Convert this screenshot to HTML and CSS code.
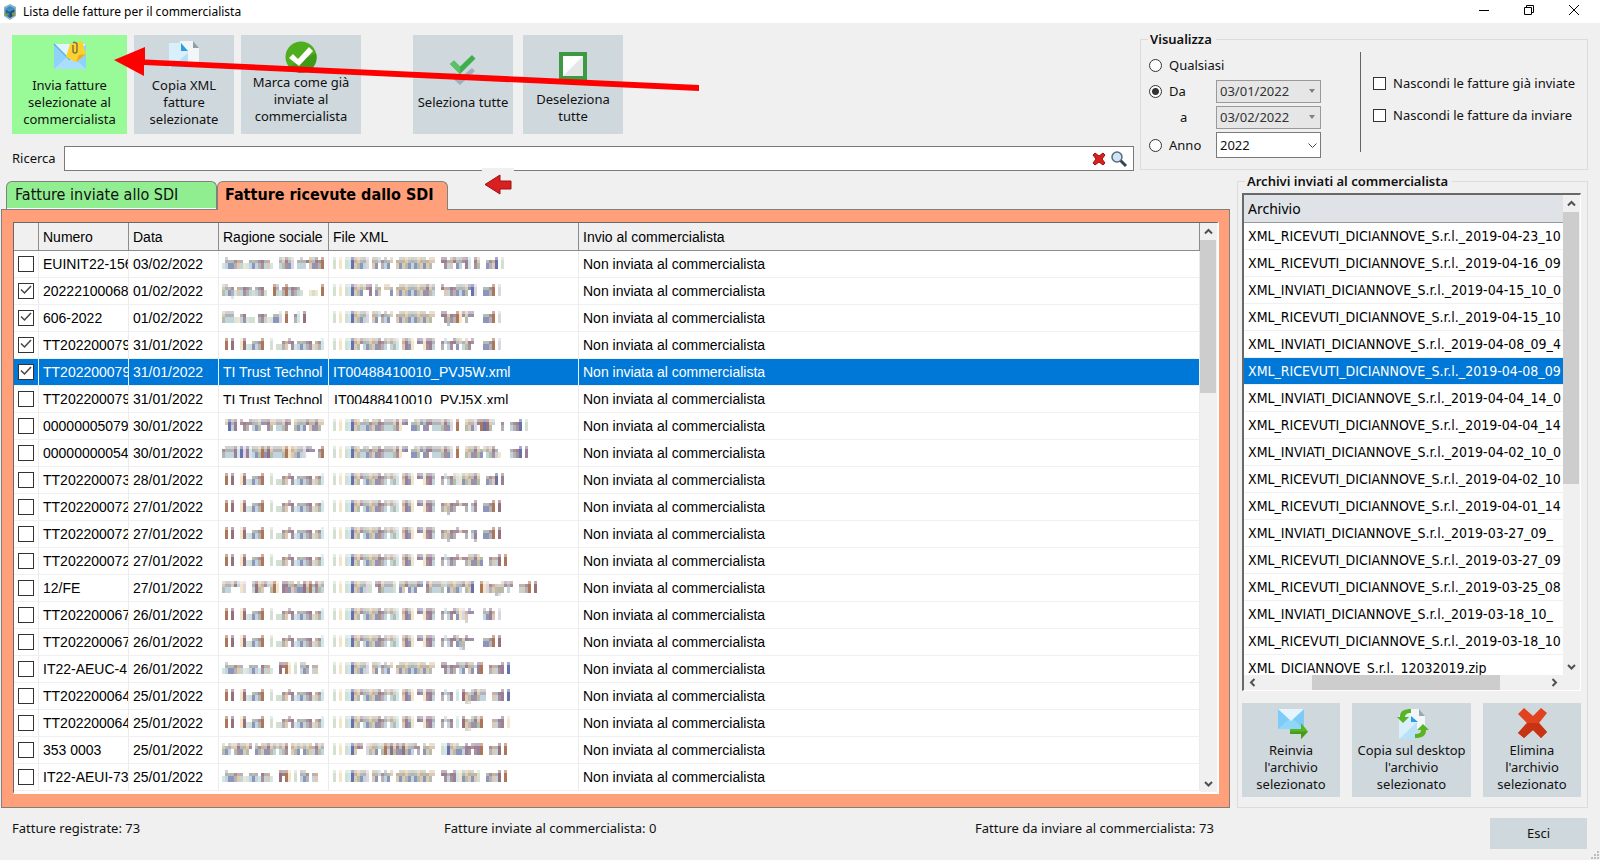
FILE: index.html
```html
<!DOCTYPE html>
<html lang="it">
<head>
<meta charset="utf-8">
<title>Lista delle fatture per il commercialista</title>
<link rel="stylesheet" href="styles.css">
</head>
<body>
<header class="titlebar">
  <svg class="app-icon" width="14" height="16" viewBox="0 0 14 16"><path d="M7 0l6 3v9l-6 4-6-4V3z" fill="#8fb0c4"/><path d="M7 2l4.500 2.500L7 7 2.500 4.500z" fill="#2f8fd0"/><path d="M2.500 5L7 7.500V14l-4.500-3z" fill="#1d6a9a"/><path d="M11.500 5L7 7.500V14l4.500-3z" fill="#1f4f7d"/><path d="M1.500 9.500h4v2h-4zM9 8.500h3v3H9z" fill="#8a9a3a"/></svg>
  <h1 class="title">Lista delle fatture per il commercialista</h1>
  <div class="window-buttons">
    <button class="win" aria-label="Riduci a icona"><svg width="12" height="12" viewBox="0 0 12 12"><path d="M1 6.500h10" stroke="#000" fill="none"/></svg></button>
    <button class="win" aria-label="Ripristina"><svg width="12" height="12" viewBox="0 0 12 12"><path d="M1.500 3.500h7v7h-7zM3.500 3.500v-2h7v7h-2" stroke="#000" fill="none"/></svg></button>
    <button class="win" aria-label="Chiudi"><svg width="12" height="12" viewBox="0 0 12 12"><path d="M1 1l10 10M11 1L1 11" stroke="#000" fill="none"/></svg></button>
  </div>
</header>

<main class="window">
  <section class="top">
    <div class="top-left">
      <div class="toolbar">
        <button class="tool tool-send">
          <svg width="34" height="30" viewBox="0 0 34 30"><path d="M1 4h32v25H1z" fill="#8fd3fa"/><path d="M1 29l13-12h6l13 12z" fill="#a9defc"/><path d="M1 4l16 16L33 4z" fill="#e2f4fd"/><path d="M1 4l16 16" stroke="#5fb4e6" stroke-width="1.500"/><path d="M17 4l12-3 4 13-10 8-10-5z" fill="#fdd22e"/><path d="M23 22l10-8-7 1z" fill="#f0a91c"/><path d="M20 5v6a2 2 0 0 0 4 0V4a2.500 2.500 0 0 0-4-1" stroke="#7d7444" stroke-width="1.500" fill="none"/></svg>
          <span>Invia fatture<br>selezionate al<br>commercialista</span>
        </button>
        <button class="tool tool-copy">
          <svg width="34" height="30" viewBox="0 0 34 30"><path d="M13 1h13l6 7v17H13z" fill="#f2f6f9"/><path d="M26 1v7h6z" fill="#8f9ea8"/><path d="M2 3h12l7 8v18H2z" fill="#d9f0fc"/><path d="M2 29L21 13v16z" fill="#b4dff6"/><path d="M14 3v8h7z" fill="#2a9fe0"/></svg>
          <span>Copia XML<br>fatture<br>selezionate</span>
        </button>
        <button class="tool tool-mark">
          <svg width="32" height="32" viewBox="0 0 32 32"><circle cx="16" cy="16" r="15.500" fill="#4fae1e"/><path d="M4 26A15.500 15.500 0 0 0 31 12z" fill="#3f9a17"/><path d="M4 17l4-4 5 5L24 6l4 4L14 25z" fill="#fff"/></svg>
          <span>Marca come già<br>inviate al<br>commercialista</span>
        </button>
        <button class="tool tool-all">
          <svg width="32" height="32" viewBox="0 0 32 32"><path d="M3 22l4-3 6 5L25 14l3 3-15 14z" fill="#9fb0ba"/><path d="M3 10l4-3.500 6 6L25 1l3.500 3.500L13 20z" fill="#3fae4c"/><path d="M3 10l4-3.500 6 6v7.500z" fill="#59c265"/></svg>
          <span>Seleziona tutte</span>
        </button>
        <button class="tool tool-none">
          <svg width="30" height="30" viewBox="0 0 30 30"><path d="M3 3h24v24H3z" fill="#fff"/><path d="M27 3v24H3z" fill="#e4e6e8"/><path d="M3 3h24v24H3z" fill="none" stroke="#3d9a43" stroke-width="4"/></svg>
          <span>Deseleziona<br>tutte</span>
        </button>
      </div>
      <div class="search">
        <label for="q">Ricerca</label>
        <div class="search-box">
          <input id="q" type="text">
          <button class="mini" aria-label="Cancella"><svg width="14" height="14" viewBox="0 0 14 14"><path d="M1 3l2-2 4 3 4-3 2 2-3 4 3 4-2 2-4-3-4 3-2-2 3-4z" fill="#d8201c" stroke="#9c1210"/></svg></button>
          <button class="mini" aria-label="Cerca"><svg width="18" height="18" viewBox="0 0 18 18"><path d="M10 10l6 6" stroke="#3c4450" stroke-width="3"/><circle cx="7" cy="7" r="5" fill="#cfe6f6" stroke="#5a6a7c" stroke-width="1.500"/></svg></button>
        </div>
      </div>
    </div>
    <fieldset class="group view">
      <legend>Visualizza</legend>
      <div class="period">
        <label class="opt"><input type="radio" name="p">Qualsiasi</label>
        <span></span>
        <label class="opt"><input type="radio" name="p" checked>Da</label>
        <div class="pick off"><select disabled aria-label="Da"><option>03/01/2022</option></select><svg width="6" height="4" viewBox="0 0 6 4"><path d="M0 0h6L3 4z" fill="#808080"/></svg></div>
        <label class="opt to" for="to">a</label>
        <div class="pick off"><select id="to" disabled><option>03/02/2022</option></select><svg width="6" height="4" viewBox="0 0 6 4"><path d="M0 0h6L3 4z" fill="#808080"/></svg></div>
        <label class="opt opt-year"><input type="radio" name="p">Anno</label>
        <div class="pick year"><select aria-label="Anno"><option>2022</option></select><svg width="9" height="6" viewBox="0 0 9 6"><path d="M.5.5l4 4 4-4" stroke="#444" fill="none"/></svg></div>
      </div>
      <div class="hide">
        <label class="opt"><input type="checkbox">Nascondi le fatture già inviate</label>
        <label class="opt"><input type="checkbox">Nascondi le fatture da inviare</label>
      </div>
    </fieldset>
  </section>

  <section class="middle">
    <div class="tabs-area">
      <div class="tabs" role="tablist">
        <button class="tab" role="tab" aria-selected="false">Fatture inviate allo SDI</button>
        <button class="tab tab-on" role="tab" aria-selected="true">Fatture ricevute dallo SDI</button>
      </div>
      <div class="panel">
        <div class="grid-box">
          <div class="grid-main">
            <table class="invoices">
              <colgroup><col class="c-check"><col class="c-num"><col class="c-date"><col class="c-name"><col class="c-file"><col></colgroup>
              <thead><tr><th></th><th>Numero</th><th>Data</th><th>Ragione sociale</th><th>File XML</th><th>Invio al commercialista</th></tr></thead>
              <tbody id="rows"></tbody>
            </table>
          </div>
          <div class="vbar">
            <svg width="17" height="17" viewBox="0 0 17 17"><path d="M5 10.500L8.500 7l3.500 3.500" stroke="#505050" stroke-width="2" fill="none"/></svg>
            <div class="thumb thumb-grid"></div>
            <svg class="end" width="17" height="17" viewBox="0 0 17 17"><path d="M5 7l3.500 3.500L12 7" stroke="#505050" stroke-width="2" fill="none"/></svg>
          </div>
        </div>
      </div>
    </div>
    <fieldset class="group archive">
      <legend>Archivi inviati al commercialista</legend>
      <div class="list">
        <div class="list-main">
          <table class="files">
            <thead><tr><th>Archivio</th></tr></thead>
            <tbody id="files"></tbody>
          </table>
        </div>
        <div class="vbar">
          <svg width="17" height="17" viewBox="0 0 17 17"><path d="M5 10.500L8.500 7l3.500 3.500" stroke="#505050" stroke-width="2" fill="none"/></svg>
          <div class="thumb thumb-list"></div>
          <svg class="end" width="17" height="17" viewBox="0 0 17 17"><path d="M5 7l3.500 3.500L12 7" stroke="#505050" stroke-width="2" fill="none"/></svg>
        </div>
        <div class="hbar">
          <svg width="17" height="15" viewBox="0 0 17 15"><path d="M10.500 4L7 7.500l3.500 3.500" stroke="#505050" stroke-width="2" fill="none"/></svg>
          <div class="track"><div class="thumb-h"></div></div>
          <svg width="17" height="15" viewBox="0 0 17 15"><path d="M6.500 4L10 7.500 6.500 11" stroke="#505050" stroke-width="2" fill="none"/></svg>
        </div>
      </div>
      <div class="actions">
        <button class="tool">
          <svg width="34" height="32" viewBox="0 0 34 32"><path d="M4 2h26v20H4z" fill="#7ecbf7"/><path d="M4 22l10-9h6l10 9z" fill="#8fd6fb"/><path d="M4 2l13 12L30 2z" fill="#e6f5fd"/><path d="M16 22h11v-6l7 8.500-7 7.500v-5H16z" fill="#58b422"/><path d="M16 24.500h18l-7 7.500v-5H16z" fill="#469c18"/></svg>
          <span>Reinvia<br>l'archivio<br>selezionato</span>
        </button>
        <button class="tool">
          <svg width="34" height="32" viewBox="0 0 34 32"><path d="M12 2h12l6 7v14H12z" fill="#f2f6f9"/><path d="M24 2v7h6z" fill="#9aa8b0"/><path d="M4 8h10l8 7v17H4z" fill="#d9f0fc"/><path d="M4 32l18-17v17z" fill="#b9e2f8"/><path d="M16 9v6h7z" fill="#2a9fe0"/><path d="M16 2v4c-4 0-6 1-6 4h4l-6 6-6-6h3c0-6 4-8 11-8z" fill="#58b422"/><path d="M20 31v-4c4 0 6-1 6-4h-4l6-6 6 6h-3c0 6-4 8-11 8z" fill="#58b422"/></svg>
          <span>Copia sul desktop<br>l'archivio<br>selezionato</span>
        </button>
        <button class="tool">
          <svg width="32" height="32" viewBox="0 0 32 32"><path d="M2 7l6-6 9 8 8-8 6 5-8 10 8 9-6 6-8-8-9 8-6-5 9-10z" fill="#e0431d"/><path d="M2 26l9-10h12l8 9-6 6-8-8-9 8z" fill="#c63413"/></svg>
          <span>Elimina<br>l'archivio<br>selezionato</span>
        </button>
      </div>
    </fieldset>
  </section>

  <footer class="status">
    <span>Fatture registrate: 73</span>
    <span>Fatture inviate al commercialista: 0</span>
    <span>Fatture da inviare al commercialista: 73</span>
    <button class="exit">Esci</button>
  </footer>
</main>

<svg class="pointer" width="590" height="50" viewBox="0 0 590 50"><path d="M0 16L31 3v12.500L585 41v6L30 21v11z" fill="#fe0000"/></svg>
<div class="hint"><svg width="28" height="21" viewBox="0 0 28 21"><path d="M1 10.500L16 1v6h11v8H16v5z" fill="#d91f1f" stroke="#9e1212"/></svg></div>
<svg class="grip" width="10" height="10" viewBox="0 0 10 10"><path d="M7 1h2v2H7zM7 4h2v2H7zM7 7h2v2H7zM4 4h2v2H4zM4 7h2v2H4zM1 7h2v2H1z" fill="#bdbdbd"/></svg>
<script src="app.js"></script>
</body>
</html>
```
FILE: styles.css
```css
* { box-sizing: border-box; }
body {
  margin: 0;
  min-height: 100vh;
  display: flex;
  flex-direction: column;
  position: relative;
  background: #f0f0f0;
  color: #111;
  font: 13px/17px "Noto Sans", "Open Sans", sans-serif;
}
button, input, select { font: inherit; color: inherit; margin: 0; }
button { border: 0; padding: 0; background: none; }
svg { display: block; flex: none; }

.titlebar { display: flex; align-items: center; height: 23px; padding: 0 20px 0 3px; background: #fff; }
.title { flex: 1; margin: 0 0 0 6px; font-size: 12px; font-weight: 400; color: #000; }
.window-buttons { display: flex; gap: 33px; align-self: flex-start; padding-top: 4px; }
.win { width: 12px; height: 12px; }

.window { flex: 1; display: flex; flex-direction: column; padding: 8px 13px 11px 1px; }
.top { display: flex; gap: 6px; padding-left: 11px; margin-right: -1px; }
.top-left { flex: 1; padding-top: 4px; }
.toolbar { display: flex; }
.tool {
  display: flex;
  flex-direction: column;
  align-items: center;
  justify-content: center;
  gap: 7px;
  height: 99px;
  background: #cfd8dd;
  text-align: center;
}
.tool-send { width: 115px; margin-right: 7px; padding-bottom: 2px; background: #98fb98; }
.tool-copy { width: 100px; margin-right: 7px; padding-bottom: 2px; }
.tool-mark { width: 120px; margin-right: 52px; gap: 1px; justify-content: flex-start; padding-top: 6px; }
.tool-all { width: 100px; margin-right: 10px; padding-bottom: 4px; gap: 8px; }
.tool-none { width: 100px; padding-top: 6px; gap: 10px; }

.search { display: flex; align-items: center; margin-top: 12px; }
.search label { width: 52px; }
.search-box { flex: 1; display: flex; align-items: center; gap: 4px; height: 25px; padding-right: 5px; border: 1px solid #7a7a7a; background: #fff; }
.search-box input { flex: 1; height: 23px; border: 0; outline: 0; background: none; }

.group { margin: 0; border: 1px solid #dcdcdc; min-width: 0; }
.group legend { padding: 0 4px 0 2px; font-weight: 600; color: #111; }
.view { width: 448px; height: 139px; padding: 0 10px 0 7px; display: flex; }
.period { display: grid; grid-template-columns: 67px 105px; align-content: start; row-gap: 3px; width: 212px; padding: 6px 0 0 1px; }
.opt { display: flex; align-items: center; gap: 7px; height: 23px; white-space: nowrap; }
.opt-year { height: 26px; }
.opt input { appearance: none; flex: none; width: 13px; height: 13px; border: 1px solid #333; background: #fff; }
.opt input[type=radio] { border-radius: 50%; }
.opt input[type=radio]:checked { background: radial-gradient(circle, #333 3px, #fff 4px); }
.to { padding-left: 31px; }
.pick { position: relative; height: 23px; }
.pick select { appearance: none; width: 100%; height: 100%; padding: 0 3px; border: 1px solid #7a7a7a; border-radius: 0; background: #fff; opacity: 1; }
.pick.off select { border-color: #999; background: #e6e6e6; color: #333; }
.pick svg { position: absolute; right: 6px; top: 9px; }
.pick.year { height: 26px; }
.pick.year svg { right: 4px; top: 11px; }
.hide { flex: 1; display: flex; flex-direction: column; gap: 9px; height: 100px; margin-top: 4px; padding: 20px 0 0 12px; border-left: 1px solid #646464; }

.middle { flex: 1; display: flex; gap: 7px; margin-right: -1px; }
.tabs-area { flex: 1; min-width: 0; display: flex; flex-direction: column; padding-top: 10px; }
.tabs { display: flex; padding-left: 5px; }
.tab {
  width: 211px;
  height: 28px;
  padding: 0 8px 2px;
  border: 1px solid #82807c;
  border-bottom: 0;
  border-radius: 6px 6px 0 0;
  background: #90ee90;
  box-shadow: inset 0 -1px #fff;
  font: 16px/20px "DejaVu Sans Condensed", "DejaVu Sans", sans-serif;
  text-align: left;
  white-space: nowrap;
}
.tab-on { width: 231px; height: 29px; margin-bottom: -1px; padding: 0 7px 3px; background: #ffa07a; box-shadow: none; font-weight: 700; color: #000; z-index: 1; }
.panel { flex: 1; padding: 12px 10px 13px 11px; border: 1px solid #82807c; background: #ffa07a; }
.grid-box { display: flex; height: 100%; border: solid #fff; border-width: 1px 2px 2px 1px; border-top-color: #696969; border-left-color: #696969; background: #fff; }
.grid-main { flex: 1; min-width: 0; }

table { border-collapse: separate; border-spacing: 0; table-layout: fixed; width: 100%; }
th, td { padding: 0 2px 0 4px; overflow: hidden; white-space: nowrap; text-align: left; font-weight: 400; color: #000; }
.invoices { font: 14px/18px "Liberation Sans", sans-serif; }
.invoices th { height: 28px; background: #f0f0f0; border-right: 1px solid #8c8c8c; border-bottom: 1px solid #8c8c8c; }
.invoices td { position: relative; height: 27px; border-right: 1px solid #ececec; border-bottom: 1px solid #f0f0f0; }
.c-check { width: 25px; }
.c-num, .c-date { width: 90px; }
.c-name { width: 110px; }
.c-file { width: 250px; }
.invoices td:first-child { padding: 0 0 1px 4px; }
.invoices td input { display: block; appearance: none; width: 16px; height: 16px; border: 1px solid #333; background: #fff; }
.invoices .tick { position: absolute; left: 5px; top: 6px; pointer-events: none; }
.invoices .sel td { background: #0078d7; color: #fff; border-right-color: #e8f2fb; }
.mosaic { display: block; height: 15px; image-rendering: pixelated; }
.name { padding-left: 3px; padding-right: 0; }
.half { display: block; height: 13px; margin-bottom: 4px; padding-left: 1px; overflow: hidden; }

.vbar { display: flex; flex-direction: column; width: 17px; background: #f0f0f0; }
.vbar .end { margin-top: auto; }
.thumb { background: #cdcdcd; width: 16px; }
.thumb-grid { height: 153px; }
.thumb-list { height: 272px; }

.archive { width: 351px; padding: 0 6px 8px 4px; margin-top: 2px; display: flex; flex-direction: column; }
.archive legend { margin-left: 3px; }
.list {
  display: grid;
  grid-template-columns: 1fr 17px;
  grid-template-rows: 1fr 15px;
  height: 498px;
  margin-top: 3px;
  border: 1px solid #fff;
  border-top: 2px solid #696969;
  border-left: 2px solid #696969;
  background: #f0f0f0;
}
.list-main { overflow: hidden; background: #fff; }
.files { font: 14px/18px "DejaVu Sans Condensed", "DejaVu Sans", sans-serif; }
.files th { height: 28px; background: #dfe3e8; border-bottom: 1px solid #999; font: 14px/18px "Noto Sans", sans-serif; }
.files td { height: 27px; padding-right: 0; border-bottom: 1px solid #f0f0f0; }
.files .sel td { background: #0078d7; color: #fff; }
.hbar { display: flex; }
.track { flex: 1; }
.thumb-h { width: 66%; height: 15px; margin-left: 18%; background: #cdcdcd; }
.actions { display: grid; grid-template-columns: 98fr 119fr 98fr; gap: 12px; margin-top: 12px; }
.actions .tool { height: 94px; gap: 3px; white-space: nowrap; }

.status { display: grid; grid-template-columns: 432px 531px 1fr 97px; padding: 10px 0 0 11px; }
.status span { padding-top: 2px; }
.exit { height: 31px; background: #cfd8dd; }

.pointer { position: absolute; left: 114px; top: 44px; pointer-events: none; }
.hint { position: absolute; left: 482px; top: 168px; width: 32px; padding: 6px 2px 0; background: #f0f0f0; }
.grip { position: absolute; right: 0; bottom: 0; }
```
FILE: app.js
```js
// Column codes for masked text: I dark stroke, D dense glyph, x low glyph,
// n pale low glyph, i pale stroke, u top part, m middle bar, q descender.
const TRUST = " I I  iInnxxxI  i nnxxuxnxxxxxnxxi";
const AMAZON = "nDxxxxxnnxxxnxxxn  IuIi i DDx xx ";
const CODE = "i i iiIDDuDDDDDDxDuDDi DIDi uuiDID";
const COMPANY = "i i iiIDDDDi DDuxDxu xDDDDDDDDDxDu";
const rows = [
  [0, "EUINIT22-156", "03/02/2022", "nDxxxxxnnxxxxxxxn  DDDDi xDxmDDDxI", COMPANY + "  uDxDuDDuIi DD  xxxI i"],
  [1, "20222100068", "01/02/2022", "DDxqnxxxxxnxxxn  IDnxIxxxxn  nnn I", "i i iiIDDDuuI Dx uux xDDDDDDDDDDDD" + "  uxxxxDDDDuIi  xxxI i"],
  [1, "606-2022", "01/02/2022", "DDDDnnxxnnn xxxnnxxi I  xi I", COMPANY + "  uDqxxIiuDuu   xxxI i"],
  [1, "TT202200079", "31/01/2022", TRUST, CODE + "  xuxxuDuxDxu   xxxI i"],
  [1, "TT202200079", "31/01/2022", "=TI Trust Technol", "=IT00488410010_PVJ5W.xml"],
  [0, "TT202200079", "31/01/2022", "/TI Trust Technol", "/IT00488410010_PVJ5X.xml"],
  [0, "00000005079", "30/01/2022", " uIDI uxxuDDDuuDDuDDDDu DDDDuDDDDu", "i i iiIDDxDDxDDDxDDDDDiuu xDDuDDuDDDDDDi I  DDDiuIIIDu  x  xxxI i"],
  [0, "00000000054", "30/01/2022", "xDDDIiIiIiDDDIDIDDDDDIiDDDDiuum xI", "i i iiIDDxDDxDDDxDDDDDiuu xDDuDDuDDDDDDi I  DDDDDxuDDDxn   xxxI I"],
  [0, "TT202200073", "28/01/2022", TRUST, CODE + "  xuxxDiiDDDDDD  xxxI I"],
  [0, "TT202200072", "27/01/2022", TRUST, CODE + "  xxqxxummx xD  xxxI I"],
  [0, "TT202200072", "27/01/2022", TRUST, CODE + "  xxqxxummx xq  xxxI I"],
  [0, "TT202200072", "27/01/2022", TRUST, CODE + "  xuxxxummxDDDDx  xxxI I"],
  [0, "12/FE", "27/01/2022", "DDDuuuii  DIDDuuDIi IDDDxDxIDIxDDD", "i i iiIDDDDii uDDDDDi DDuDDDuu DDDDDDuDDDDDuDDI  IiixxqqDuDu  xxxI I"],
  [0, "TT202200067", "26/01/2022", TRUST, CODE + "  xuxxuDiiqum   DxIx i"],
  [0, "TT202200067", "26/01/2022", TRUST, CODE + "  xuxxuDqqumm   xxxI I"],
  [0, "IT22-AEUC-4", "26/01/2022", AMAZON, COMPANY + "  uDxxxuDDuDDmII  xxxxI I"],
  [0, "TT202200064", "25/01/2022", TRUST, CODE + "  xuxx i IqqDDDDD  xxxI I"],
  [0, "TT202200064", "25/01/2022", TRUST, CODE + "  xuxx i IqqDDDI   xxxI i"],
  [0, "353 0003", "25/01/2022", "DxDuDDDDDu DxDDDDDuDDD DDDuDDDxDDD", "i i iiIDuu iDDDuDIDIDDDIDDDux DxDu" + "  iiIDDDxxIxuDII  xxxI I"],
  [0, "IT22-AEUI-73", "25/01/2022", AMAZON, COMPANY + "  uDxxIiiDDDDxi  xxxxI I"]
];

const shades = ["#a98f9c", "#cbb09a", "#8d94bd", "#b3b3b6", "#dccab5", "#9b8190", "#c2d4dc", "#b2bfae"];
const darks = ["#9a7f96", "#ab7659", "#6672ac", "#96707a"];
const pales = ["#d3dfd0", "#cfe6ea", "#f4e4c8", "#dcd6e0"];
const spans = { I: [0, 4], D: [0, 4], i: [0, 4], x: [1, 4], n: [2, 4], u: [0, 2], m: [1, 2], q: [1, 5] };

function drawMosaic(canvas, code) {
  const ctx = canvas.getContext("2d");
  [...code].forEach((ch, x) => {
    if (!spans[ch]) return;
    const set = "in".includes(ch) ? pales : ch === "I" ? darks : shades;
    for (let y = spans[ch][0]; y < spans[ch][1]; y++) {
      const k = ch === "I" || ch === "i" ? x * 5 : x * 7 + (y >> 1) * 3 + ((x * x) >> 2) + ch.charCodeAt(0);
      ctx.globalAlpha = y === 0 || y === 4 ? 0.6 : 1;
      ctx.fillStyle = set[k % set.length];
      ctx.fillRect(x, y, 1, 1);
    }
  });
}

function textCell(tr, value, cls) {
  const td = tr.insertCell();
  td.className = cls || "";
  if (!cls) td.textContent = value;
  else if (value[0] === "=") {
    td.className = "";
    td.textContent = value.slice(1);
  } else if (value[0] === "/") {
    const span = document.createElement("span");
    span.className = "half";
    span.textContent = value.slice(1);
    td.append(span);
  } else {
    const canvas = document.createElement("canvas");
    canvas.className = "mosaic";
    canvas.width = value.length;
    canvas.height = 5;
    canvas.style.width = value.length * 3 + "px";
    td.append(canvas);
    drawMosaic(canvas, value);
  }
}

rows.forEach(([checked, num, date, name, file], i) => {
  const tr = document.getElementById("rows").insertRow();
  if (i === 4) tr.className = "sel";
  const td = tr.insertCell();
  td.innerHTML = `<input type="checkbox" aria-label="${num}"${checked ? " checked" : ""}>` +
    (checked ? '<svg class="tick" width="14" height="12" viewBox="0 0 14 12"><path d="M2 5.500l3.500 3.500L12 2" stroke="#444" stroke-width="1.500" fill="none"/></svg>' : "");
  textCell(tr, num);
  textCell(tr, date);
  textCell(tr, name, "name");
  textCell(tr, file, "file");
  textCell(tr, "Non inviata al commercialista");
});

const files = [
  "RICEVUTI 2019-04-23_10", "RICEVUTI 2019-04-16_09", "INVIATI 2019-04-15_10_0", "RICEVUTI 2019-04-15_10",
  "INVIATI 2019-04-08_09_4", "RICEVUTI 2019-04-08_09", "INVIATI 2019-04-04_14_0", "RICEVUTI 2019-04-04_14",
  "INVIATI 2019-04-02_10_0", "RICEVUTI 2019-04-02_10", "RICEVUTI 2019-04-01_14", "INVIATI 2019-03-27_09_",
  "RICEVUTI 2019-03-27_09", "RICEVUTI 2019-03-25_08", "INVIATI 2019-03-18_10_", "RICEVUTI 2019-03-18_10"
].map(f => "XML_" + f.replace(" ", "_DICIANNOVE_S.r.l._"));
files.push("XML_DICIANNOVE_S.r.l._12032019.zip");
files.forEach((f, i) => {
  const tr = document.getElementById("files").insertRow();
  if (i === 5) tr.className = "sel";
  tr.insertCell().textContent = f;
});
```
